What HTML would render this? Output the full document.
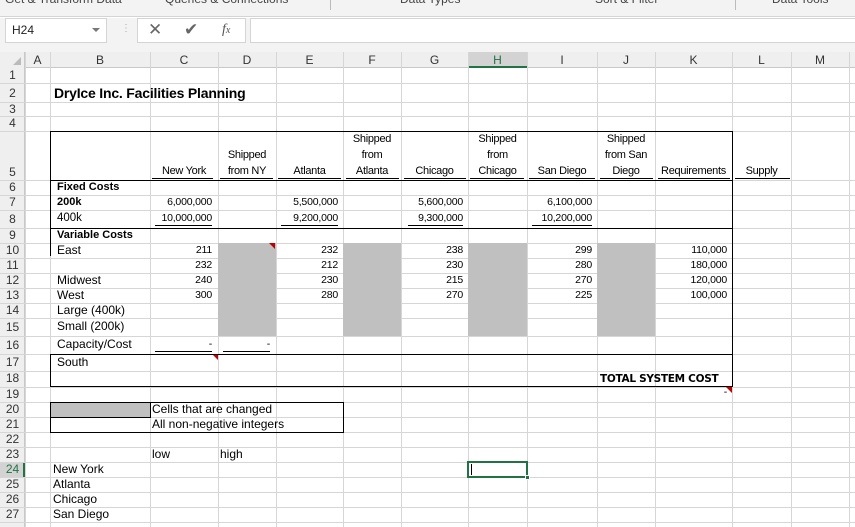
<!DOCTYPE html>
<html><head><meta charset="utf-8"><style>
*{margin:0;padding:0;box-sizing:border-box}
body{width:855px;height:527px;overflow:hidden;background:#fff;font-family:"Liberation Sans",Arial,sans-serif;position:relative}
div{position:absolute}
.v{width:1px;top:52px;height:475px;background:#d6d6d6}
.h{height:1px;left:0;width:855px;background:#d6d6d6}
.ch{top:52px;height:16px;line-height:16px;text-align:center;font-size:12px;color:#333}
.rh{left:0;width:25px;text-align:center;font-size:12px;color:#333}
.t{font-size:12px;color:#000;white-space:nowrap}
.n{font-size:10.5px;color:#000;text-align:right;white-space:nowrap;letter-spacing:-0.2px}
.hd{font-size:11px;text-align:center;line-height:16px;color:#000;letter-spacing:-0.3px}
.bl{font-size:11px;font-weight:bold}
.b{background:#000}
.g{background:#c0c0c0}
</style></head><body>
<div style="left:0;top:0;width:855px;height:17px;background:#f3f3f3;border-bottom:1px solid #d4d4d4;overflow:hidden">
<div style="left:5px;top:-8px;font-size:12px;color:#444">Get &amp; Transform Data</div>
<div style="left:165px;top:-8px;font-size:12px;color:#444">Queries &amp; Connections</div>
<div style="left:400px;top:-8px;font-size:12px;color:#444">Data Types</div>
<div style="left:595px;top:-8px;font-size:12px;color:#444">Sort &amp; Filter</div>
<div style="left:772px;top:-8px;font-size:12px;color:#444">Data Tools</div>
<div style="left:330px;top:0;width:1px;height:10px;background:#bbb"></div>
<div style="left:735px;top:0;width:1px;height:10px;background:#bbb"></div>
</div>
<div style="left:0;top:18px;width:855px;height:34px;background:#f3f3f3"></div>
<div style="left:5px;top:18px;width:102px;height:25px;background:#fff;border:1px solid #d4d4d4"></div>
<div style="left:12px;top:23px;font-size:12px;color:#222">H24</div>
<div style="left:92px;top:28px;width:0;height:0;border-left:4px solid transparent;border-right:4px solid transparent;border-top:4px solid #777"></div>
<div style="left:121px;top:23px;font-size:10px;color:#aaa">⋮</div>
<div style="left:137px;top:18px;width:109px;height:25px;background:#fff;border:1px solid #d4d4d4"></div>
<div style="left:148px;top:20px;font-size:17px;color:#666">✕</div>
<div style="left:184px;top:20px;font-size:17px;color:#666">✔</div>
<div style="left:222px;top:22px;font-size:14px;color:#555;font-style:italic;font-family:'Liberation Serif',serif">f<span style="font-size:10px">x</span></div>
<div style="left:250px;top:18px;width:605px;height:25px;background:#fff;border:1px solid #d4d4d4;border-right:none"></div>
<div style="left:0;top:52px;width:855px;height:16px;background:#efefef;border-bottom:1px solid #c8c8c8"></div>
<div style="left:0;top:52px;width:25px;height:475px;background:#efefef;border-right:1px solid #c8c8c8"></div>
<div style="left:468px;top:52px;width:59px;height:16px;background:#d3d3d3;border-bottom:2px solid #217346"></div>
<div style="left:0;top:462px;width:25px;height:15px;background:#d3d3d3;border-right:2px solid #217346"></div>
<div style="left:13px;top:57px;width:0;height:0;border-left:8px solid transparent;border-bottom:8px solid #bbb"></div>
<div class="v" style="left:25px"></div><div class="v" style="left:50px"></div><div class="v" style="left:150px"></div><div class="v" style="left:218px"></div><div class="v" style="left:276px"></div><div class="v" style="left:343px"></div><div class="v" style="left:401px"></div><div class="v" style="left:468px"></div><div class="v" style="left:527px"></div><div class="v" style="left:597px"></div><div class="v" style="left:655px"></div><div class="v" style="left:732px"></div><div class="v" style="left:791px"></div><div class="v" style="left:849px"></div>
<div class="h" style="top:83px"></div><div class="h" style="top:102px"></div><div class="h" style="top:116px"></div><div class="h" style="top:131px"></div><div class="h" style="top:180px"></div><div class="h" style="top:195px"></div><div class="h" style="top:210px"></div><div class="h" style="top:228px"></div><div class="h" style="top:243px"></div><div class="h" style="top:258px"></div><div class="h" style="top:273px"></div><div class="h" style="top:288px"></div><div class="h" style="top:303px"></div><div class="h" style="top:318px"></div><div class="h" style="top:336px"></div><div class="h" style="top:354px"></div><div class="h" style="top:371px"></div><div class="h" style="top:387px"></div><div class="h" style="top:402px"></div><div class="h" style="top:417px"></div><div class="h" style="top:432px"></div><div class="h" style="top:447px"></div><div class="h" style="top:462px"></div><div class="h" style="top:477px"></div><div class="h" style="top:492px"></div><div class="h" style="top:507px"></div><div class="h" style="top:522px"></div>
<div class="ch" style="left:25px;width:25px">A</div><div class="ch" style="left:50px;width:100px">B</div><div class="ch" style="left:150px;width:68px">C</div><div class="ch" style="left:218px;width:58px">D</div><div class="ch" style="left:276px;width:67px">E</div><div class="ch" style="left:343px;width:58px">F</div><div class="ch" style="left:401px;width:67px">G</div><div class="ch" style="left:468px;width:59px;color:#217346">H</div><div class="ch" style="left:527px;width:70px">I</div><div class="ch" style="left:597px;width:58px">J</div><div class="ch" style="left:655px;width:77px">K</div><div class="ch" style="left:732px;width:59px">L</div><div class="ch" style="left:791px;width:58px">M</div>
<div class="rh" style="top:68px;line-height:15px">1</div><div class="rh" style="top:86px;line-height:15px">2</div><div class="rh" style="top:102px;line-height:14px">3</div><div class="rh" style="top:116px;line-height:15px">4</div><div class="rh" style="top:165px;line-height:15px">5</div><div class="rh" style="top:180px;line-height:15px">6</div><div class="rh" style="top:195px;line-height:15px">7</div><div class="rh" style="top:212px;line-height:15px">8</div><div class="rh" style="top:228px;line-height:15px">9</div><div class="rh" style="top:243px;line-height:15px">10</div><div class="rh" style="top:258px;line-height:15px">11</div><div class="rh" style="top:273px;line-height:15px">12</div><div class="rh" style="top:288px;line-height:15px">13</div><div class="rh" style="top:303px;line-height:15px">14</div><div class="rh" style="top:320px;line-height:15px">15</div><div class="rh" style="top:338px;line-height:15px">16</div><div class="rh" style="top:355px;line-height:15px">17</div><div class="rh" style="top:371px;line-height:15px">18</div><div class="rh" style="top:387px;line-height:15px">19</div><div class="rh" style="top:402px;line-height:15px">20</div><div class="rh" style="top:417px;line-height:15px">21</div><div class="rh" style="top:432px;line-height:15px">22</div><div class="rh" style="top:447px;line-height:15px">23</div><div class="rh" style="top:462px;line-height:15px;color:#217346">24</div><div class="rh" style="top:477px;line-height:15px">25</div><div class="rh" style="top:492px;line-height:15px">26</div><div class="rh" style="top:507px;line-height:15px">27</div>
<div class="g" style="left:218px;top:243px;width:58px;height:93px"></div>
<div class="g" style="left:343px;top:243px;width:58px;height:93px"></div>
<div class="g" style="left:468px;top:243px;width:59px;height:93px"></div>
<div class="g" style="left:597px;top:243px;width:58px;height:93px"></div>
<div class="g" style="left:50px;top:402px;width:100px;height:15px"></div>
<div class="t" style="left:54px;top:85px;font-size:14px;font-weight:bold;letter-spacing:-0.2px">DryIce Inc. Facilities Planning</div>
<div class="hd" style="left:150px;top:163px;width:68px">New York</div>
<div class="hd" style="left:218px;top:147px;width:58px">Shipped<br>from NY</div>
<div class="hd" style="left:276px;top:163px;width:67px">Atlanta</div>
<div class="hd" style="left:343px;top:131px;width:58px">Shipped<br>from<br>Atlanta</div>
<div class="hd" style="left:401px;top:163px;width:67px">Chicago</div>
<div class="hd" style="left:468px;top:131px;width:59px">Shipped<br>from<br>Chicago</div>
<div class="hd" style="left:527px;top:163px;width:70px">San Diego</div>
<div class="hd" style="left:597px;top:131px;width:58px">Shipped<br>from San<br>Diego</div>
<div class="hd" style="left:655px;top:163px;width:77px">Requirements</div>
<div class="hd" style="left:732px;top:163px;width:59px">Supply</div>
<div class="b" style="left:152px;top:178px;width:61px;height:1px"></div>
<div class="b" style="left:220px;top:178px;width:53px;height:1px"></div>
<div class="b" style="left:278px;top:178px;width:63px;height:1px"></div>
<div class="b" style="left:346px;top:178px;width:53px;height:1px"></div>
<div class="b" style="left:404px;top:178px;width:62px;height:1px"></div>
<div class="b" style="left:470px;top:178px;width:54px;height:1px"></div>
<div class="b" style="left:529px;top:178px;width:66px;height:1px"></div>
<div class="b" style="left:600px;top:178px;width:53px;height:1px"></div>
<div class="b" style="left:658px;top:178px;width:72px;height:1px"></div>
<div class="b" style="left:735px;top:178px;width:55px;height:1px"></div>
<div class="t bl" style="left:57px;top:181px">Fixed Costs</div>
<div class="t bl" style="left:57px;top:196px">200k</div>
<div class="t" style="left:57px;top:212px;font-size:11.5px">400k</div>
<div class="t bl" style="left:57px;top:229px">Variable Costs</div>
<div class="t" style="left:57px;top:243px">East</div>
<div class="t" style="left:57px;top:273px">Midwest</div>
<div class="t" style="left:57px;top:288px">West</div>
<div class="t" style="left:57px;top:303px">Large (400k)</div>
<div class="t" style="left:57px;top:319px">Small (200k)</div>
<div class="t" style="left:57px;top:337px">Capacity/Cost</div>
<div class="t" style="left:57px;top:355px">South</div>
<div class="n" style="left:150px;top:196px;width:62px">6,000,000</div>
<div class="n" style="left:150px;top:212px;width:62px">10,000,000</div>
<div class="n" style="left:276px;top:196px;width:62px">5,500,000</div>
<div class="n" style="left:276px;top:212px;width:62px">9,200,000</div>
<div class="n" style="left:401px;top:196px;width:62px">5,600,000</div>
<div class="n" style="left:401px;top:212px;width:62px">9,300,000</div>
<div class="n" style="left:527px;top:196px;width:65px">6,100,000</div>
<div class="n" style="left:527px;top:212px;width:65px">10,200,000</div>
<div class="b" style="left:155px;top:225px;width:57px;height:1px"></div>
<div class="b" style="left:281px;top:225px;width:57px;height:1px"></div>
<div class="b" style="left:408px;top:225px;width:55px;height:1px"></div>
<div class="b" style="left:532px;top:225px;width:60px;height:1px"></div>
<div class="n" style="left:150px;top:244px;width:62px">211</div><div class="n" style="left:150px;top:259px;width:62px">232</div><div class="n" style="left:150px;top:274px;width:62px">240</div><div class="n" style="left:150px;top:289px;width:62px">300</div>
<div class="n" style="left:276px;top:244px;width:62px">232</div><div class="n" style="left:276px;top:259px;width:62px">212</div><div class="n" style="left:276px;top:274px;width:62px">230</div><div class="n" style="left:276px;top:289px;width:62px">280</div>
<div class="n" style="left:401px;top:244px;width:62px">238</div><div class="n" style="left:401px;top:259px;width:62px">230</div><div class="n" style="left:401px;top:274px;width:62px">215</div><div class="n" style="left:401px;top:289px;width:62px">270</div>
<div class="n" style="left:527px;top:244px;width:65px">299</div><div class="n" style="left:527px;top:259px;width:65px">280</div><div class="n" style="left:527px;top:274px;width:65px">270</div><div class="n" style="left:527px;top:289px;width:65px">225</div>
<div class="n" style="left:655px;top:244px;width:72px">110,000</div><div class="n" style="left:655px;top:259px;width:72px">180,000</div><div class="n" style="left:655px;top:274px;width:72px">120,000</div><div class="n" style="left:655px;top:289px;width:72px">100,000</div>
<div class="n" style="left:150px;top:338px;width:62px">-</div>
<div class="n" style="left:218px;top:338px;width:52px">-</div>
<div class="b" style="left:155px;top:351px;width:57px;height:1px"></div>
<div class="b" style="left:223px;top:351px;width:47px;height:1px"></div>
<div class="t" style="left:600px;top:373px;font-size:10.5px;font-weight:bold;font-family:'DejaVu Sans',sans-serif;letter-spacing:-0.3px">TOTAL SYSTEM COST</div>
<div class="n" style="left:700px;top:386px;width:27px">-</div>
<div style="left:269px;top:243px;width:0;height:0;border-left:6px solid transparent;border-top:6px solid #c00000"></div>
<div style="left:212px;top:354px;width:0;height:0;border-left:6px solid transparent;border-top:6px solid #c00000"></div>
<div style="left:726px;top:387px;width:0;height:0;border-left:6px solid transparent;border-top:6px solid #c00000"></div>
<div class="b" style="left:50px;top:131px;width:683px;height:1px"></div>
<div class="b" style="left:50px;top:386px;width:683px;height:1px"></div>
<div class="b" style="left:50px;top:131px;width:1px;height:125px"></div>
<div class="b" style="left:50px;top:354px;width:1px;height:33px"></div>
<div class="b" style="left:732px;top:131px;width:1px;height:256px"></div>
<div class="b" style="left:50px;top:180px;width:683px;height:1px"></div>
<div class="b" style="left:50px;top:228px;width:683px;height:1px"></div>
<div class="b" style="left:50px;top:354px;width:683px;height:1px"></div>
<div style="left:50px;top:402px;width:294px;height:31px;border:1px solid #000"></div>
<div style="left:50px;top:402px;width:101px;height:16px;border:1px solid #000"></div>
<div class="t" style="left:152px;top:402px">Cells that are changed</div>
<div class="t" style="left:152px;top:417px">All non-negative integers</div>
<div class="t" style="left:152px;top:447px">low</div>
<div class="t" style="left:220px;top:447px">high</div>
<div class="t" style="left:53px;top:462px">New York</div>
<div class="t" style="left:53px;top:477px">Atlanta</div>
<div class="t" style="left:53px;top:492px">Chicago</div>
<div class="t" style="left:53px;top:507px">San Diego</div>
<div style="left:467px;top:461px;width:61px;height:17px;border:2px solid #217346"></div>
<div style="left:525px;top:475px;width:5px;height:5px;background:#217346;border:1px solid #fff"></div>
<div style="left:471px;top:464px;width:1px;height:11px;background:#000"></div>
</body></html>
